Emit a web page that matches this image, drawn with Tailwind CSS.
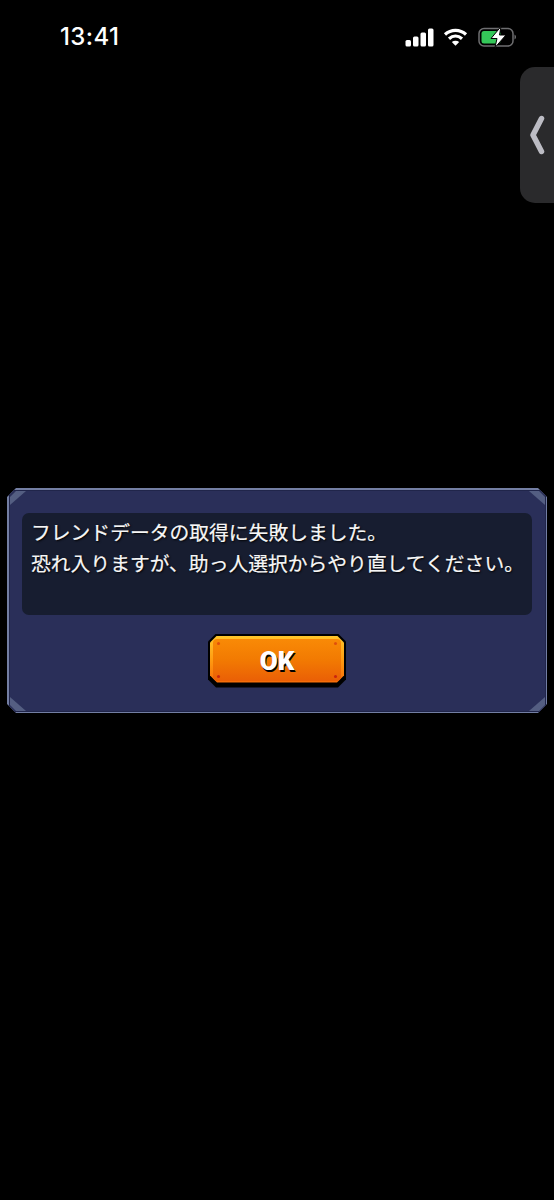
<!doctype html>
<html lang="ja">
<head>
<meta charset="UTF-8" />
<script src="https://cdn.jsdelivr.net/npm/@tailwindcss/browser@4"></script>
<title>Error</title>
</head>
<body class="bg-black">
<div class="relative w-[554px] h-[1200px] overflow-hidden bg-black font-['Noto_Sans_CJK_JP','Noto_Sans',sans-serif]">

  <!-- status bar -->
  <div class="flex items-center justify-between h-[74px] pl-[60px] pr-[37px] text-white">
    <span class="font-['Inter',sans-serif] font-medium text-[24px] leading-none tracking-[0.4px]">13:41</span>
    <div class="flex items-center">
      <svg class="mr-[9px]" width="29" height="19" viewBox="0 0 29 19" fill="#fff">
        <rect x="0.500" y="12" width="5.500" height="6.500" rx="1.500"/>
        <rect x="8" y="8.500" width="5.500" height="10" rx="1.500"/>
        <rect x="15.500" y="4.500" width="5.500" height="14" rx="1.500"/>
        <rect x="23" y="0.500" width="5.500" height="18" rx="1.500"/>
      </svg>
      <svg class="mr-[10px]" width="25" height="18" viewBox="0 0 24 18" fill="none" stroke="#fff" stroke-width="3.200">
        <path d="M1.500 6.500C7.500 1 16.500 1 22.500 6.500"/>
        <path d="M5.500 10.800C9.500 7.300 14.500 7.300 18.500 10.800"/>
        <path d="M12 17.800L8.300 14C10.500 12.200 13.500 12.200 15.700 14Z" fill="#fff" stroke="none"/>
      </svg>
      <svg width="39" height="22" viewBox="0 0 39 22" fill="none">
        <rect x="1" y="2.500" width="34" height="17.500" rx="5" stroke="#6e6e70" stroke-width="1.500"/>
        <rect x="3.500" y="5" width="19" height="12.500" rx="2.500" fill="#34c759"/>
        <path d="M36.500 8.500v5c.9-.4 1.500-1.400 1.500-2.500s-.6-2.100-1.500-2.500Z" fill="#6e6e70"/>
        <path d="M23 0.500L13 12.500H19L17 21.500L28 9H21.500Z" fill="#fff" stroke="#000" stroke-width="1"/>
      </svg>
    </div>
  </div>

  <!-- side handle -->
  <div class="absolute top-[67px] right-0 w-[34px] h-[136px] bg-[#2a2a2c] rounded-l-[15px] flex items-center pl-[9px]">
    <svg width="16" height="40" viewBox="0 0 16 40" fill="none">
      <path d="M12.500 3.500L4 20L12.500 36.500" stroke="#bcbcc4" stroke-width="5.500" stroke-linecap="round" stroke-linejoin="round"/>
    </svg>
  </div>

  <!-- dialog -->
  <div class="mt-[414px] mx-[7px] h-[225px] bg-[#737ea3] p-[1.500px] relative [clip-path:polygon(9px_0,calc(100%-9px)_0,100%_9px,100%_calc(100%-9px),calc(100%-9px)_100%,9px_100%,0_calc(100%-9px),0_9px)]">
    <div class="h-full bg-[#2a2f59] pt-[22px] px-[12.500px] relative border border-[#20254a]">

      <svg class="absolute top-0 left-0" width="17" height="15" viewBox="0 0 17 15"><path d="M0 6L6 0H16L0 14Z" fill="#545e82"/></svg>
      <svg class="absolute top-0 right-0" width="17" height="15" viewBox="0 0 17 15"><path d="M17 6L11 0H1L17 14Z" fill="#545e82"/></svg>
      <svg class="absolute bottom-0 left-0" width="17" height="15" viewBox="0 0 17 15"><path d="M0 9L6 15H16L0 1Z" fill="#545e82"/></svg>
      <svg class="absolute bottom-0 right-0" width="17" height="15" viewBox="0 0 17 15"><path d="M17 9L11 15H1L17 1Z" fill="#545e82"/></svg>

      <!-- message -->
      <div class="h-[102px] bg-[#171d30] rounded-[7px] pl-[9px] pt-[3px] text-[#f6f6f6] text-[19.8px] leading-[31px] [text-shadow:1px_1px_2px_#000] [-webkit-text-stroke:0.2px_#fff]">
        <p>フレンドデータの取得に失敗しました。</p>
        <p>恐れ入りますが、助っ人選択からやり直してください。</p>
      </div>

      <!-- button -->
      <div class="flex justify-center mt-[19px]">
        <div class="w-[138px] h-[54px] bg-black p-[2px] pb-[5px] [clip-path:polygon(8px_0,calc(100%-8px)_0,100%_8px,100%_calc(100%-8px),calc(100%-8px)_100%,8px_100%,0_calc(100%-8px),0_8px)]">
          <div class="h-full bg-gradient-to-b from-[#ffc52a] via-[#ff9c12] to-[#f56a08] pt-[3px] px-[3px] pb-[2px] [clip-path:polygon(7px_0,calc(100%-7px)_0,100%_7px,100%_calc(100%-7px),calc(100%-7px)_100%,7px_100%,0_calc(100%-7px),0_7px)]">
            <div class="relative h-full bg-gradient-to-b from-[#f98a06] via-[#f27a02] to-[#ea5f06] rounded-[4px] flex items-center justify-center">
              <span class="absolute top-[3px] left-[4px] w-[3px] h-[3px] rounded-full bg-[#e0500c]"></span>
              <span class="absolute top-[3px] right-[4px] w-[3px] h-[3px] rounded-full bg-[#e0500c]"></span>
              <span class="absolute bottom-[3px] left-[4px] w-[3px] h-[3px] rounded-full bg-[#c9260f]"></span>
              <span class="absolute bottom-[3px] right-[4px] w-[3px] h-[3px] rounded-full bg-[#c9260f]"></span>
              <span class="pt-[2px] font-['Roboto',sans-serif] font-black text-[26px] leading-none text-white [text-shadow:1px_2px_0_#000]">OK</span>
            </div>
          </div>
        </div>
      </div>
    </div>
  </div>

</div>
</body>
</html>
